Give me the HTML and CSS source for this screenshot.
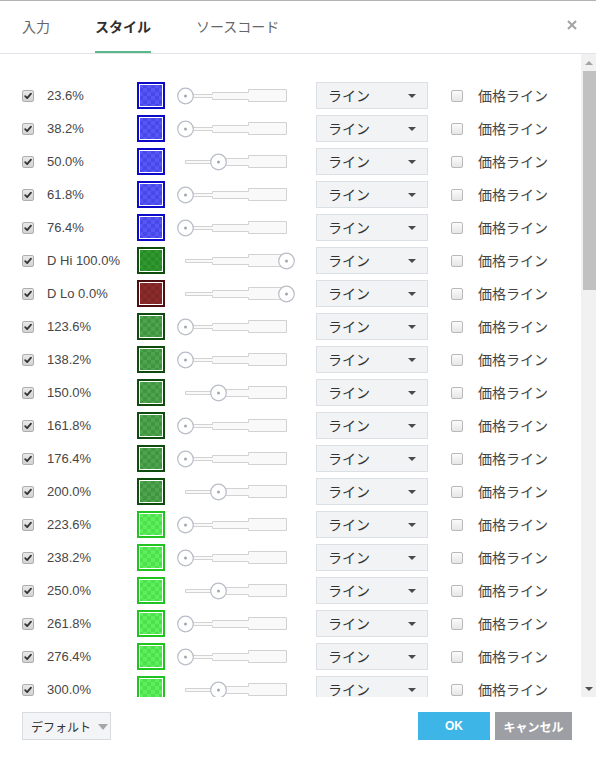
FILE: index.html
```html
<!DOCTYPE html>
<html lang="ja">
<head>
<meta charset="utf-8">
<title>スタイル</title>
<link rel="stylesheet" href="styles.css">
</head>
<body>
<svg class="defs" width="0" height="0" aria-hidden="true">
  <symbol id="track" viewBox="0 0 120 20">
    <path d="M9.5 8.5 H36.5 V6.5 H72.5 V3.5 H110.5 V15.5 H72.5 V13.5 H36.5 V11.5 H9.5 Z" fill="#f9f9f9" stroke="#d2d2d2" stroke-width="1"/>
  </symbol>
  <symbol id="chk" viewBox="0 0 12 12">
    <path d="M2.6 6.2 L5 8.6 L9.6 3.2" fill="none" stroke="#333" stroke-width="2.1" stroke-linecap="round" stroke-linejoin="round"/>
  </symbol>
</svg>
<div class="dialog">
  <header class="tabs">
    <span class="tab">入力</span>
    <span class="tab active">スタイル</span>
    <span class="tab">ソースコード</span>
    <span class="close"><svg width="10" height="10" viewBox="0 0 10 10"><path d="M1 1 L9 9 M9 1 L1 9" stroke="#a2a2a2" stroke-width="2"/></svg></span>
  </header>
  <div class="body">
    <div class="list">
      <div class="row"><span class="cb on"><svg><use href="#chk"/></svg></span><span class="lbl">23.6%</span><span class="sw blue"></span><svg class="slider" viewBox="0 0 120 20"><use href="#track"/><circle class="knob" cx="9.5" cy="10" r="7.8"/><circle class="dot" cx="9.5" cy="10" r="1.5"/></svg><span class="sel">ライン<i class="caret"></i></span><span class="cb"></span><span class="lbl2">価格ライン</span></div>
      <div class="row"><span class="cb on"><svg><use href="#chk"/></svg></span><span class="lbl">38.2%</span><span class="sw blue"></span><svg class="slider" viewBox="0 0 120 20"><use href="#track"/><circle class="knob" cx="9.5" cy="10" r="7.8"/><circle class="dot" cx="9.5" cy="10" r="1.5"/></svg><span class="sel">ライン<i class="caret"></i></span><span class="cb"></span><span class="lbl2">価格ライン</span></div>
      <div class="row"><span class="cb on"><svg><use href="#chk"/></svg></span><span class="lbl">50.0%</span><span class="sw blue"></span><svg class="slider" viewBox="0 0 120 20"><use href="#track"/><circle class="knob" cx="42.5" cy="10" r="7.8"/><circle class="dot" cx="42.5" cy="10" r="1.5"/></svg><span class="sel">ライン<i class="caret"></i></span><span class="cb"></span><span class="lbl2">価格ライン</span></div>
      <div class="row"><span class="cb on"><svg><use href="#chk"/></svg></span><span class="lbl">61.8%</span><span class="sw blue"></span><svg class="slider" viewBox="0 0 120 20"><use href="#track"/><circle class="knob" cx="9.5" cy="10" r="7.8"/><circle class="dot" cx="9.5" cy="10" r="1.5"/></svg><span class="sel">ライン<i class="caret"></i></span><span class="cb"></span><span class="lbl2">価格ライン</span></div>
      <div class="row"><span class="cb on"><svg><use href="#chk"/></svg></span><span class="lbl">76.4%</span><span class="sw blue"></span><svg class="slider" viewBox="0 0 120 20"><use href="#track"/><circle class="knob" cx="9.5" cy="10" r="7.8"/><circle class="dot" cx="9.5" cy="10" r="1.5"/></svg><span class="sel">ライン<i class="caret"></i></span><span class="cb"></span><span class="lbl2">価格ライン</span></div>
      <div class="row"><span class="cb on"><svg><use href="#chk"/></svg></span><span class="lbl">D Hi 100.0%</span><span class="sw dhi"></span><svg class="slider" viewBox="0 0 120 20"><use href="#track"/><circle class="knob" cx="110.5" cy="10" r="7.8"/><circle class="dot" cx="110.5" cy="10" r="1.5"/></svg><span class="sel">ライン<i class="caret"></i></span><span class="cb"></span><span class="lbl2">価格ライン</span></div>
      <div class="row"><span class="cb on"><svg><use href="#chk"/></svg></span><span class="lbl">D Lo 0.0%</span><span class="sw dlo"></span><svg class="slider" viewBox="0 0 120 20"><use href="#track"/><circle class="knob" cx="110.5" cy="10" r="7.8"/><circle class="dot" cx="110.5" cy="10" r="1.5"/></svg><span class="sel">ライン<i class="caret"></i></span><span class="cb"></span><span class="lbl2">価格ライン</span></div>
      <div class="row"><span class="cb on"><svg><use href="#chk"/></svg></span><span class="lbl">123.6%</span><span class="sw green"></span><svg class="slider" viewBox="0 0 120 20"><use href="#track"/><circle class="knob" cx="9.5" cy="10" r="7.8"/><circle class="dot" cx="9.5" cy="10" r="1.5"/></svg><span class="sel">ライン<i class="caret"></i></span><span class="cb"></span><span class="lbl2">価格ライン</span></div>
      <div class="row"><span class="cb on"><svg><use href="#chk"/></svg></span><span class="lbl">138.2%</span><span class="sw green"></span><svg class="slider" viewBox="0 0 120 20"><use href="#track"/><circle class="knob" cx="9.5" cy="10" r="7.8"/><circle class="dot" cx="9.5" cy="10" r="1.5"/></svg><span class="sel">ライン<i class="caret"></i></span><span class="cb"></span><span class="lbl2">価格ライン</span></div>
      <div class="row"><span class="cb on"><svg><use href="#chk"/></svg></span><span class="lbl">150.0%</span><span class="sw green"></span><svg class="slider" viewBox="0 0 120 20"><use href="#track"/><circle class="knob" cx="42.5" cy="10" r="7.8"/><circle class="dot" cx="42.5" cy="10" r="1.5"/></svg><span class="sel">ライン<i class="caret"></i></span><span class="cb"></span><span class="lbl2">価格ライン</span></div>
      <div class="row"><span class="cb on"><svg><use href="#chk"/></svg></span><span class="lbl">161.8%</span><span class="sw green"></span><svg class="slider" viewBox="0 0 120 20"><use href="#track"/><circle class="knob" cx="9.5" cy="10" r="7.8"/><circle class="dot" cx="9.5" cy="10" r="1.5"/></svg><span class="sel">ライン<i class="caret"></i></span><span class="cb"></span><span class="lbl2">価格ライン</span></div>
      <div class="row"><span class="cb on"><svg><use href="#chk"/></svg></span><span class="lbl">176.4%</span><span class="sw green"></span><svg class="slider" viewBox="0 0 120 20"><use href="#track"/><circle class="knob" cx="9.5" cy="10" r="7.8"/><circle class="dot" cx="9.5" cy="10" r="1.5"/></svg><span class="sel">ライン<i class="caret"></i></span><span class="cb"></span><span class="lbl2">価格ライン</span></div>
      <div class="row"><span class="cb on"><svg><use href="#chk"/></svg></span><span class="lbl">200.0%</span><span class="sw green"></span><svg class="slider" viewBox="0 0 120 20"><use href="#track"/><circle class="knob" cx="42.5" cy="10" r="7.8"/><circle class="dot" cx="42.5" cy="10" r="1.5"/></svg><span class="sel">ライン<i class="caret"></i></span><span class="cb"></span><span class="lbl2">価格ライン</span></div>
      <div class="row"><span class="cb on"><svg><use href="#chk"/></svg></span><span class="lbl">223.6%</span><span class="sw lime"></span><svg class="slider" viewBox="0 0 120 20"><use href="#track"/><circle class="knob" cx="9.5" cy="10" r="7.8"/><circle class="dot" cx="9.5" cy="10" r="1.5"/></svg><span class="sel">ライン<i class="caret"></i></span><span class="cb"></span><span class="lbl2">価格ライン</span></div>
      <div class="row"><span class="cb on"><svg><use href="#chk"/></svg></span><span class="lbl">238.2%</span><span class="sw lime"></span><svg class="slider" viewBox="0 0 120 20"><use href="#track"/><circle class="knob" cx="9.5" cy="10" r="7.8"/><circle class="dot" cx="9.5" cy="10" r="1.5"/></svg><span class="sel">ライン<i class="caret"></i></span><span class="cb"></span><span class="lbl2">価格ライン</span></div>
      <div class="row"><span class="cb on"><svg><use href="#chk"/></svg></span><span class="lbl">250.0%</span><span class="sw lime"></span><svg class="slider" viewBox="0 0 120 20"><use href="#track"/><circle class="knob" cx="42.5" cy="10" r="7.8"/><circle class="dot" cx="42.5" cy="10" r="1.5"/></svg><span class="sel">ライン<i class="caret"></i></span><span class="cb"></span><span class="lbl2">価格ライン</span></div>
      <div class="row"><span class="cb on"><svg><use href="#chk"/></svg></span><span class="lbl">261.8%</span><span class="sw lime"></span><svg class="slider" viewBox="0 0 120 20"><use href="#track"/><circle class="knob" cx="9.5" cy="10" r="7.8"/><circle class="dot" cx="9.5" cy="10" r="1.5"/></svg><span class="sel">ライン<i class="caret"></i></span><span class="cb"></span><span class="lbl2">価格ライン</span></div>
      <div class="row"><span class="cb on"><svg><use href="#chk"/></svg></span><span class="lbl">276.4%</span><span class="sw lime"></span><svg class="slider" viewBox="0 0 120 20"><use href="#track"/><circle class="knob" cx="9.5" cy="10" r="7.8"/><circle class="dot" cx="9.5" cy="10" r="1.5"/></svg><span class="sel">ライン<i class="caret"></i></span><span class="cb"></span><span class="lbl2">価格ライン</span></div>
      <div class="row"><span class="cb on"><svg><use href="#chk"/></svg></span><span class="lbl">300.0%</span><span class="sw lime"></span><svg class="slider" viewBox="0 0 120 20"><use href="#track"/><circle class="knob" cx="42.5" cy="10" r="7.8"/><circle class="dot" cx="42.5" cy="10" r="1.5"/></svg><span class="sel">ライン<i class="caret"></i></span><span class="cb"></span><span class="lbl2">価格ライン</span></div>
    </div>
    <div class="scrollbar">
      <span class="sb-btn"><i class="up"></i></span>
      <span class="thumb"></span>
      <span class="sb-fill"></span>
      <span class="sb-btn"><i class="down"></i></span>
    </div>
  </div>
  <footer class="foot">
    <span class="defbtn">デフォルト<i class="caret gray"></i></span>
    <span class="spacer"></span>
    <span class="btn ok">OK</span>
    <span class="btn cancel">キャンセル</span>
  </footer>
</div>
</body>
</html>
```

FILE: styles.css
```css
* { box-sizing: border-box; }
html, body { margin: 0; padding: 0; background: #fff; }
body {
  width: 596px;
  height: 764px;
  overflow: hidden;
  font-family: "Liberation Sans", "Noto Sans CJK JP", sans-serif;
  color: #444;
}
.defs { display: block; width: 0; height: 0; overflow: hidden; }
.dialog {
  width: 596px;
  height: 764px;
  display: flex;
  flex-direction: column;
  border-top: 1px solid #b3b3b3;
}
.tabs {
  height: 53px;
  flex: none;
  display: flex;
  align-items: stretch;
  gap: 45px;
  padding-left: 22px;
  border-bottom: 1px solid #e0e3e8;
}
.tab {
  font-family: "Noto Sans CJK JP", sans-serif;
  font-size: 14px;
  line-height: 1;
  color: #666;
  display: flex;
  align-items: center;
  border-bottom: 2px solid transparent;
}
.tab.active {
  color: #2f2f2f;
  font-weight: 700;
  border-bottom-color: #5ab98c;
}
.close {
  margin-left: auto;
  padding-right: 19px;
  display: flex;
  align-items: center;
  padding-bottom: 4px;
}
.close svg { display: block; }
.body {
  flex: none;
  height: 643px;
  display: flex;
}
.list {
  flex: 1;
  overflow: hidden;
  padding-top: 25px;
}
.row {
  height: 33px;
  display: grid;
  grid-template-columns: 25px 90px 39px 140px 135px 27px auto;
  align-items: center;
  padding-left: 22px;
}
.cb {
  width: 12px;
  height: 12px;
  border: 1px solid #b9b9b9;
  border-radius: 2px;
  background: linear-gradient(#fbfbfb, #e6e6e6);
  display: block;
}
.cb.on {
  background: linear-gradient(#e9e9e9, #d3d3d3);
  border-color: #aeaeae;
}
.cb svg { display: block; width: 10px; height: 10px; }
.lbl {
  font-size: 13px;
  color: #464646;
  white-space: nowrap;
}
.sw {
  width: 28px;
  height: 27px;
  border: 2px solid;
  padding: 1px;
  background-clip: content-box;
  display: block;
  box-shadow: inset 0 0 0 1px #fff;
}
.sw.blue {
  border-color: #0a0ac8;
  background-color: #5656f8;
  background-image: conic-gradient(#4848e6 25%, transparent 0 50%, #4848e6 0 75%, transparent 0);
  background-size: 8px 8px;
}
.sw.dhi {
  border-color: #0e4c0e;
  background-color: #2f992f;
  background-image: conic-gradient(#288b28 25%, transparent 0 50%, #288b28 0 75%, transparent 0);
  background-size: 8px 8px;
}
.sw.dlo {
  border-color: #4c0e0e;
  background-color: #8c2b2b;
  background-image: conic-gradient(#7e2525 25%, transparent 0 50%, #7e2525 0 75%, transparent 0);
  background-size: 8px 8px;
}
.sw.green {
  border-color: #0e4c0e;
  background-color: #4ca44c;
  background-image: conic-gradient(#419441 25%, transparent 0 50%, #419441 0 75%, transparent 0);
  background-size: 8px 8px;
}
.sw.lime {
  border-color: #1fc41f;
  background-color: #5cf05c;
  background-image: conic-gradient(#4fe04f 25%, transparent 0 50%, #4fe04f 0 75%, transparent 0);
  background-size: 8px 8px;
}
.slider { display: block; width: 120px; height: 20px; }
.knob { fill: #fff; stroke: #b9bdc7; stroke-width: 1.2; }
.dot { fill: #a3a7b1; }
.sel {
  width: 112px;
  height: 27px;
  background: #f2f3f5;
  border: 1px solid #dcdfe4;
  font-family: "Noto Sans CJK JP", sans-serif;
  font-size: 14px;
  line-height: 1;
  color: #333;
  display: flex;
  align-items: center;
  justify-content: space-between;
  padding: 0 11px 1px 11px;
}
.caret {
  width: 0;
  height: 0;
  border-left: 4px solid transparent;
  border-right: 4px solid transparent;
  border-top: 4px solid #4a4a4a;
  margin-top: 2px;
}
.caret.gray {
  border-left-width: 5px;
  border-right-width: 5px;
  border-top: 6px solid #a6a6a6;
}
.lbl2 {
  font-family: "Noto Sans CJK JP", sans-serif;
  font-size: 14px;
  line-height: 1;
  color: #444;
  white-space: nowrap;
  padding-bottom: 1px;
}
.scrollbar {
  width: 15px;
  flex: none;
  background: #f1f1f1;
  display: flex;
  flex-direction: column;
  align-items: flex-end;
}
.sb-btn {
  width: 15px;
  height: 17px;
  display: flex;
  align-items: center;
  justify-content: center;
  flex: none;
}
.up, .down {
  width: 0;
  height: 0;
  border-left: 4px solid transparent;
  border-right: 4px solid transparent;
}
.up { border-bottom: 4px solid #a3a3a3; }
.down { border-top: 4px solid #505050; }
.thumb {
  width: 13px;
  height: 219px;
  background: #c1c1c1;
  flex: none;
}
.sb-fill { flex: 1; }
.foot {
  flex: 1;
  display: flex;
  align-items: flex-start;
  padding: 15px 24px 0 22px;
  gap: 5px;
}
.defbtn {
  width: 89px;
  height: 28px;
  background: #f3f4f6;
  border: 1px solid #d8dbe0;
  font-family: "Noto Sans CJK JP", sans-serif;
  font-size: 12px;
  color: #333;
  display: flex;
  align-items: center;
  gap: 7px;
  padding-left: 8px;
}
.spacer { flex: 1; }
.btn {
  height: 28px;
  display: flex;
  align-items: center;
  justify-content: center;
  color: #fff;
  font-weight: 700;
  font-family: "Noto Sans CJK JP", sans-serif;
  font-size: 12px;
}
.btn.ok { width: 72px; background: #3db5e6; font-family: "Liberation Sans", sans-serif; }
.btn.cancel { width: 77px; background: #9d9fa4; }
```
